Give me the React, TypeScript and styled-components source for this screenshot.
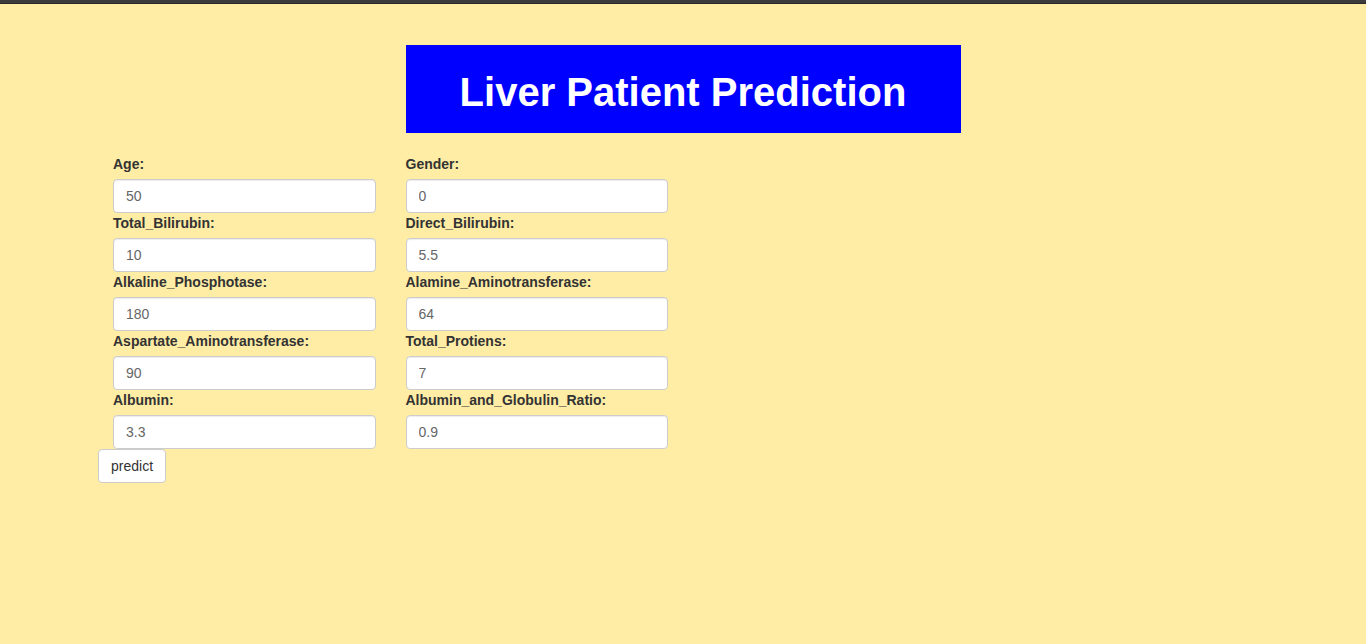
import React from "react";
import styled, { createGlobalStyle } from "styled-components";

const Global = createGlobalStyle`
  html, body { margin: 0; padding: 0; }
  body {
    background: #ffeda6;
    font-family: "Liberation Sans", Arial, sans-serif;
    font-size: 14px;
    line-height: 20px;
    color: #333;
    min-height: 644px;
  }
  * { box-sizing: border-box; }
`;

const TopBar = styled.div`
  height: 4px;
  background: #3c3c3c;
  border-bottom: 1px solid #2a2a2a;
`;

const Container = styled.div`
  width: 1170px;
  margin: 0 auto;
`;

const TitleBox = styled.div`
  width: 555px;
  height: 88px;
  margin: 41px auto 21px;
  padding-top: 6px;
  background: #0000ff;
  display: flex;
  align-items: center;
  justify-content: center;
`;

const Title = styled.h1`
  margin: 0;
  color: #fff;
  font-family: "Liberation Sans", Arial, sans-serif;
  font-weight: bold;
  font-size: 40px;
  line-height: 44px;
`;

const FieldGrid = styled.div`
  padding: 0 15px;
  display: grid;
  grid-template-columns: 262.5px 262.5px;
  column-gap: 30px;
`;

const Field = styled.div`
  display: flex;
  flex-direction: column;
`;

const Label = styled.label`
  font-weight: bold;
  font-size: 14px;
  line-height: 20px;
  margin-bottom: 5px;
  color: #333;
`;

const Input = styled.input`
  width: 100%;
  height: 34px;
  padding: 6px 12px;
  font-family: "Liberation Sans", Arial, sans-serif;
  font-size: 14px;
  color: #666;
  background: #fff;
  border: 1px solid #ccc;
  border-radius: 4px;
  box-shadow: inset 0 1px 1px rgba(0, 0, 0, 0.075);
  outline: none;
`;

const Button = styled.button`
  height: 34px;
  padding: 6px 12px;
  font-family: "Liberation Sans", Arial, sans-serif;
  font-size: 14px;
  color: #333;
  background: #fff;
  border: 1px solid #ccc;
  border-radius: 4px;
  cursor: pointer;
`;

const fields: [string, string][] = [
  ["Age:", "50"],
  ["Gender:", "0"],
  ["Total_Bilirubin:", "10"],
  ["Direct_Bilirubin:", "5.5"],
  ["Alkaline_Phosphotase:", "180"],
  ["Alamine_Aminotransferase:", "64"],
  ["Aspartate_Aminotransferase:", "90"],
  ["Total_Protiens:", "7"],
  ["Albumin:", "3.3"],
  ["Albumin_and_Globulin_Ratio:", "0.9"],
];

export default function App() {
  return (
    <>
      <Global />
      <TopBar />
      <Container>
        <TitleBox>
          <Title>Liver Patient Prediction</Title>
        </TitleBox>
        <FieldGrid>
          {fields.map(([label, value]) => (
            <Field key={label}>
              <Label>{label}</Label>
              <Input defaultValue={value} />
            </Field>
          ))}
        </FieldGrid>
        <Button>predict</Button>
      </Container>
    </>
  );
}
